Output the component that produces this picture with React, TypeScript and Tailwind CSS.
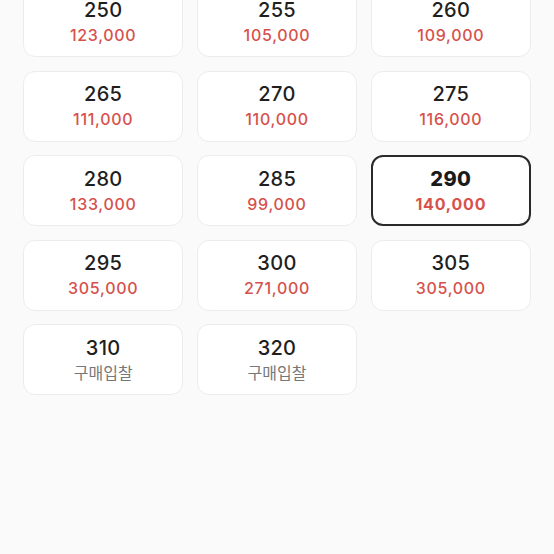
import React from "react";

const items: { size: string; price: string | null; selected?: boolean }[] = [
  { size: "250", price: "123,000" },
  { size: "255", price: "105,000" },
  { size: "260", price: "109,000" },
  { size: "265", price: "111,000" },
  { size: "270", price: "110,000" },
  { size: "275", price: "116,000" },
  { size: "280", price: "133,000" },
  { size: "285", price: "99,000" },
  { size: "290", price: "140,000", selected: true },
  { size: "295", price: "305,000" },
  { size: "300", price: "271,000" },
  { size: "305", price: "305,000" },
  { size: "310", price: null },
  { size: "320", price: null },
];

export default function App() {
  return (
    <div
      className="w-[554px] h-[554px] overflow-hidden bg-[#fafafa]"
      style={{ fontFamily: 'Inter, "Noto Sans CJK KR", sans-serif' }}
    >
      <div className="grid grid-cols-3 gap-x-[13.5px] gap-y-[13.5px] px-[23px] mt-[-14px]">
        {items.map((it) => (
          <div
            key={it.size}
            className={
              it.selected
                ? "h-[71px] rounded-[12px] bg-white border-2 border-[#2a2a2a] flex flex-col items-center justify-center"
                : "h-[71px] rounded-[12px] bg-white border border-[#ececec] flex flex-col items-center justify-center"
            }
          >
            <div
              className={
                it.selected
                  ? "text-[20px] leading-[24px] font-extrabold tracking-[0.4px] text-[#1a1a1a]"
                  : "text-[20px] leading-[24px] font-medium tracking-[0.3px] text-[#1f1f1f]"
              }
            >
              {it.size}
            </div>
            {it.price ? (
              <div
                className={
                  it.selected
                    ? "text-[16px] leading-[22px] mt-[2px] font-bold tracking-[0.8px] text-[#d9514b]"
                    : "text-[16px] leading-[22px] mt-[2px] font-medium tracking-[0.7px] text-[#d6514b]"
                }
              >
                {it.price}
              </div>
            ) : (
              <div className="text-[16px] leading-[22px] mt-[2px] text-[#777777]">구매입찰</div>
            )}
          </div>
        ))}
      </div>
    </div>
  );
}
